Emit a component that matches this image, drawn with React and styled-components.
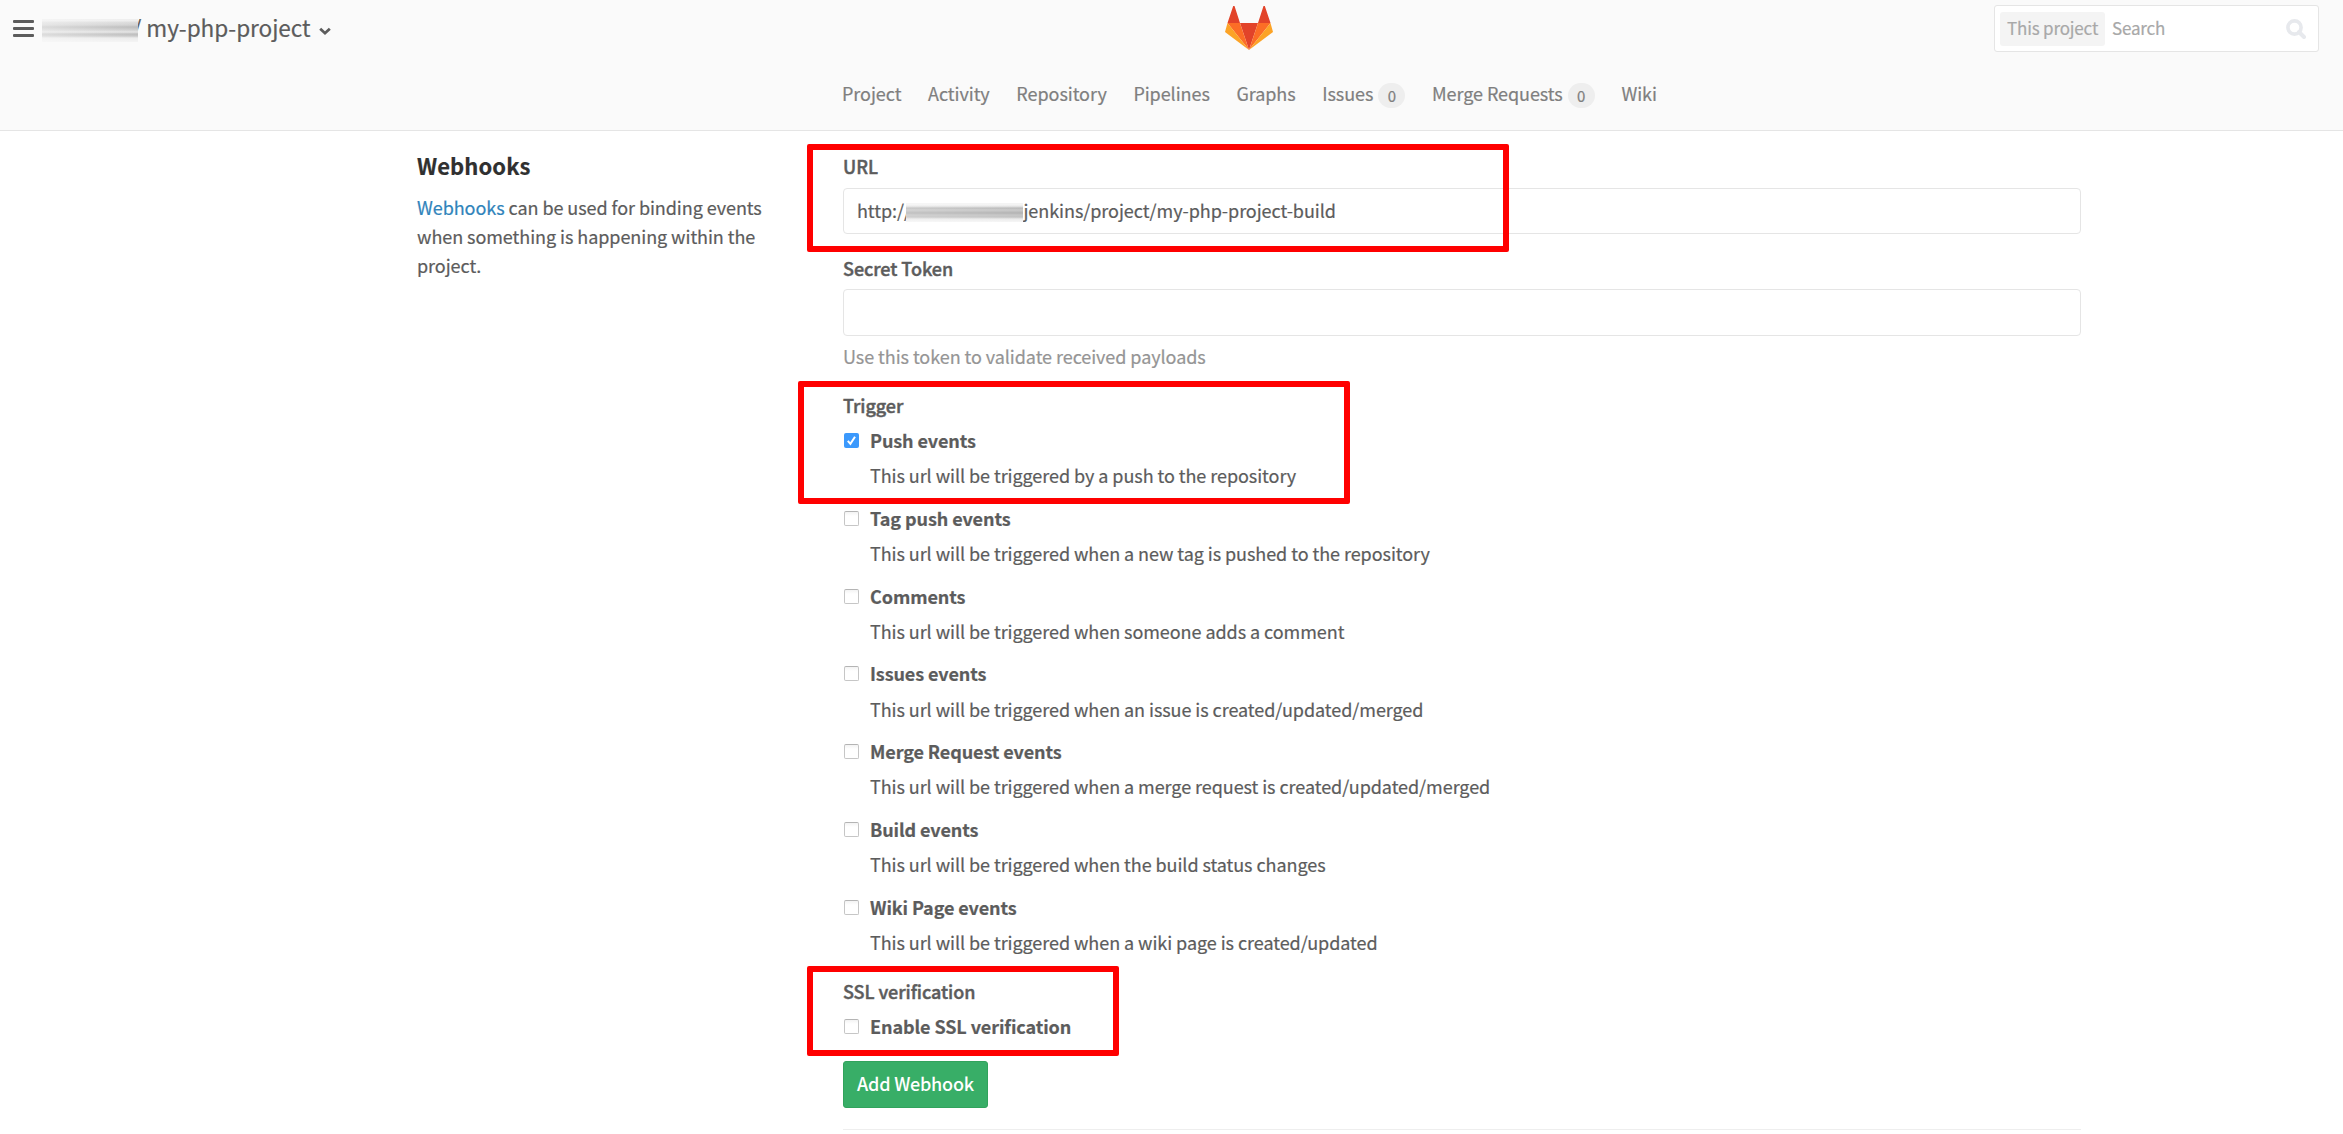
import React from "react";
import styled, { createGlobalStyle, css } from "styled-components";

const Global = createGlobalStyle`
  *, *::before, *::after { box-sizing: border-box; }
  html, body { margin: 0; padding: 0; background: #fff; overflow: hidden; }
  body {
    font-family: "Noto Sans CJK SC", "Open Sans", sans-serif;
    font-size: 18px;
    letter-spacing: -0.06px;
    color: #5c5c5c;
    -webkit-text-stroke: 0.2px currentColor;
  }
`;

const Page = styled.div`
  width: 2343px;
  height: 1134px;
  overflow: hidden;
  background: #fff;
`;

const Header = styled.header`
  height: 131px;
  background: #fafafa;
  border-bottom: 1px solid #e5e5e5;
`;

const TopBar = styled.div`
  display: grid;
  grid-template-columns: 1212px 48px 1fr;
  height: 57px;
  padding: 5px 24px 0 13px;
`;

const TitleArea = styled.div`
  display: flex;
  align-items: flex-start;
`;

const MenuButton = styled.button`
  display: flex;
  flex-direction: column;
  gap: 4px;
  width: 21px;
  margin: 15px 8px 0 0;
  padding: 0;
  border: 0;
  background: none;
`;

const MenuBar = styled.span`
  height: 3px;
  border-radius: 1px;
  background: #5c5c5c;
`;

const Title = styled.h1`
  margin: 0;
  font-size: 22.6px;
  line-height: 45px;
  font-weight: 400;
  white-space: pre;
`;

const Redaction = styled.span`
  position: relative;
  z-index: 1;
  flex: none;
`;

const OwnerRedaction = styled(Redaction)`
  width: 96px;
  height: 23px;
  margin: 14px -5.5px 0 0;
  background:
    linear-gradient(90deg, rgba(250, 250, 250, 0.5), rgba(250, 250, 250, 0)),
    linear-gradient(#eee 0 2px, #ddd 3px, #d2d2d2 6px, #bbb 8px, #cfcfcf 11px, #e4e4e4 13px, #bdbdbd 15px, #c8c8c8 17px, #ececec 19px, #f4f4f4);
`;

const HostRedaction = styled(Redaction)`
  width: 117px;
  height: 19px;
  margin: 14px 0 0 -4.500px;
  background:
    linear-gradient(90deg, rgba(255, 255, 255, 0.2), rgba(255, 255, 255, 0)),
    linear-gradient(#f4f4f4 0 2px, #dadada 4px, #b8b8b8 5px, #cacaca 7px, #b2b2b2 10px, #c6c6c6 12px, #c2c2c2 14px, #ececec 16px, #f6f6f6);
`;

const Chevron = styled.svg`
  margin: 22px 0 0 8.5px;
`;

const LogoMark = styled.svg`
  margin-top: 1px;
`;

const SearchBox = styled.div`
  justify-self: end;
  display: flex;
  align-items: center;
  width: 325px;
  height: 47px;
  padding: 0 12px 0 5px;
  border: 1px solid #e5e5e5;
  border-radius: 3px;
  background: #fff;
  color: #a8a8a8;
  font-size: 17px;
  letter-spacing: -0.17px;
`;

const Scope = styled.span`
  height: 34px;
  width: 105px;
  padding-left: 7px;
  border-radius: 3px;
  background: #f4f4f4;
  line-height: 31px;
  white-space: nowrap;
`;

const Placeholder = styled.span`
  flex: 1;
  height: 34px;
  padding-left: 7px;
  line-height: 31px;
`;

const Nav = styled.nav`
  display: flex;
  gap: 26.67px;
  padding-left: 842px;
  height: 73px;
  line-height: 73px;
  color: #7f7f7f;
  white-space: nowrap;
`;

const NavItem = styled.a`
  display: flex;
  align-items: center;
`;

const Badge = styled.span`
  width: 27px;
  height: 25px;
  margin: 3px 0 0 5px;
  border-radius: 13px;
  background: #eee;
  font-size: 15px;
  line-height: 25px;
  text-align: center;
`;

const Content = styled.main`
  display: grid;
  grid-template-columns: 426px 1238px;
  padding: 14px 0 0 417px;
`;

const Heading = styled.h4`
  margin: 0;
  font-size: 22px;
  line-height: 40px;
  font-weight: 700;
  letter-spacing: 0.08px;
  color: #303030;
`;

const Intro = styled.p`
  margin: 8px 0 0;
  line-height: 29px;
`;

const IntroLine = styled.span`
  display: flex;
  white-space: pre;
`;

const Link = styled.a`
  color: #3084bb;
`;

const Form = styled.form`
  display: flex;
  flex-direction: column;
`;

const Group = styled.div`
  position: relative;
  display: flex;
  flex-direction: column;
  height: ${(p) => p.$h}px;
`;

const Label = styled.label`
  height: 29px;
  margin-top: ${(p) => p.$mt}px;
  line-height: 29px;
  font-weight: 500;
  white-space: nowrap;
  -webkit-text-stroke-width: 0.45px;
`;

const Field = styled.div`
  display: flex;
  height: ${(p) => p.$h}px;
  margin-top: ${(p) => p.$mt}px;
  padding-left: 13px;
  border: 1px solid #e5e5e5;
  border-radius: 4px;
  line-height: 42px;
`;

const Hint = styled.p`
  margin: 6px 0 0;
  line-height: 29px;
  color: #959595;
`;

const Highlight = styled.div`
  position: absolute;
  z-index: 2;
  left: ${(p) => p.$x}px;
  top: ${(p) => p.$y}px;
  width: ${(p) => p.$w}px;
  height: ${(p) => p.$h}px;
  border: 6px solid #f00;
  border-radius: 2px;
  pointer-events: none;
`;

const OptionList = styled.div`
  display: flex;
  flex-direction: column;
  padding-top: 5.8px;
`;

const Option = styled.div`
  display: grid;
  grid-template-columns: 27px 1fr;
  grid-template-rows: 35.15px 1fr;
  height: ${(p) => p.$h || 77.88}px;
`;

const Check = styled.span`
  width: 15px;
  height: 15px;
  margin: 7px 0 0 1px;
  border-radius: 2px;
  border: 1px solid #c6c6c6;
  border-top-color: #b4b4b4;
  background: linear-gradient(#f3f3f3, #fff 4px);
  ${(p) => p.$on && css`
    border: 0;
    background: #3b99fc;
  `}
`;

const Tick = styled.svg`
  display: block;
`;

const OptionName = styled.strong`
  line-height: 29px;
  font-weight: 700;
  letter-spacing: -0.09px;
  white-space: nowrap;
`;

const OptionText = styled.span`
  grid-column: 2;
  line-height: 29px;
  white-space: nowrap;
`;

const Submit = styled.button`
  width: 145px;
  height: 47px;
  padding: 0;
  border: 1px solid #31a35c;
  border-radius: 3px;
  background: #38ae67;
  color: #fff;
  font: 500 18px/43px "Noto Sans CJK SC", sans-serif;
  letter-spacing: -0.22px;
  -webkit-text-stroke-width: 0;
  display: flex;
  justify-content: center;
`;

const Rule = styled.hr`
  width: 100%;
  margin: 21px 0 0;
  border: 0;
  border-top: 1px solid #eee;
`;

const OPTIONS = [
  { name: "Push events", text: "This url will be triggered by a push to the repository", on: true },
  { name: "Tag push events", text: "This url will be triggered when a new tag is pushed to the repository" },
  { name: "Comments", text: "This url will be triggered when someone adds a comment" },
  { name: "Issues events", text: "This url will be triggered when an issue is created/updated/merged" },
  { name: "Merge Request events", text: "This url will be triggered when a merge request is created/updated/merged" },
  { name: "Build events", text: "This url will be triggered when the build status changes" },
  { name: "Wiki Page events", text: "This url will be triggered when a wiki page is created/updated" },
];

const NAV = [
  { name: "Project" },
  { name: "Activity" },
  { name: "Repository" },
  { name: "Pipelines" },
  { name: "Graphs" },
  { name: "Issues", count: "0" },
  { name: "Merge Requests", count: "0" },
  { name: "Wiki" },
];

function CheckOption({ name, text, on, height }) {
  return (
    <Option $h={height}>
      <Check $on={on}>
        {on && (
          <Tick width="15" height="15" viewBox="0 0 15 15">
            <path d="M3.800 7.800 6.400 10.800 11 3.800" fill="none" stroke="#fff" strokeWidth="2" />
          </Tick>
        )}
      </Check>
      <OptionName>{name}</OptionName>
      {text && <OptionText>{text}</OptionText>}
    </Option>
  );
}

export default function App() {
  return (
    <Page>
      <Global />
      <Header>
        <TopBar>
          <TitleArea>
            <MenuButton><MenuBar /><MenuBar /><MenuBar /></MenuButton>
            <OwnerRedaction />
            <Title>/ my-php-project</Title>
            <Chevron width="12" height="9" viewBox="0 0 12 9">
              <path d="M1.200 1.700 6 6.200 10.800 1.700" fill="none" stroke="#5c5c5c" strokeWidth="2.800" />
            </Chevron>
          </TitleArea>
          <LogoMark width="48" height="44" viewBox="0 0 48 44">
            <path d="M24 44 15 17h18z" fill="#e24329" />
            <path d="M24 44 15 17H2.500zM24 44l9-27h12.500z" fill="#fc6d26" />
            <path d="M2.500 17 0 26l24 18zM45.500 17 48 26 24 44z" fill="#fca326" />
            <path d="M2.500 17H15L9.500 0H8.200zM45.500 17H33L38.500 0h1.300z" fill="#e24329" />
          </LogoMark>
          <SearchBox>
            <Scope>This project</Scope>
            <Placeholder>Search</Placeholder>
            <svg width="20" height="20" viewBox="0 0 20 20">
              <circle cx="8.500" cy="8.500" r="6.600" fill="none" stroke="#e7e9ed" strokeWidth="3.600" />
              <path d="m13 13 5 5" stroke="#e7e9ed" strokeWidth="4" strokeLinecap="round" />
            </svg>
          </SearchBox>
        </TopBar>
        <Nav>
          {NAV.map((item) => (
            <NavItem key={item.name}>
              {item.name}
              {item.count && <Badge>{item.count}</Badge>}
            </NavItem>
          ))}
        </Nav>
      </Header>
      <Content>
        <section>
          <Heading>Webhooks</Heading>
          <Intro>
            <IntroLine><Link>Webhooks</Link><span>{" can be used for binding events"}</span></IntroLine>
            <IntroLine>when something is happening within the</IntroLine>
            <IntroLine>project.</IntroLine>
          </Intro>
        </section>
        <Form>
          <Group $h={102}>
            <Label $mt={7}>URL</Label>
            <Field $h={46} $mt={7}>
              <span>http://</span>
              <HostRedaction />
              <span>jenkins/project/my-php-project-build</span>
            </Field>
            <Highlight $x={-36} $y={-1} $w={702} $h={108} />
          </Group>
          <Group $h={137}>
            <Label $mt={7}>Secret Token</Label>
            <Field $h={47} $mt={6} />
            <Hint>Use this token to validate received payloads</Hint>
          </Group>
          <Group $h={587}>
            <Label $mt={7}>Trigger</Label>
            <OptionList>
              {OPTIONS.map((o) => <CheckOption key={o.name} {...o} />)}
            </OptionList>
            <Highlight $x={-45} $y={-3} $w={552} $h={123} />
          </Group>
          <Group $h={90}>
            <Label $mt={6}>SSL verification</Label>
            <OptionList>
              <CheckOption name="Enable SSL verification" height={35} />
            </OptionList>
            <Highlight $x={-36} $y={-5} $w={312} $h={90} />
          </Group>
          <Submit type="button">Add Webhook</Submit>
          <Rule />
        </Form>
      </Content>
    </Page>
  );
}
